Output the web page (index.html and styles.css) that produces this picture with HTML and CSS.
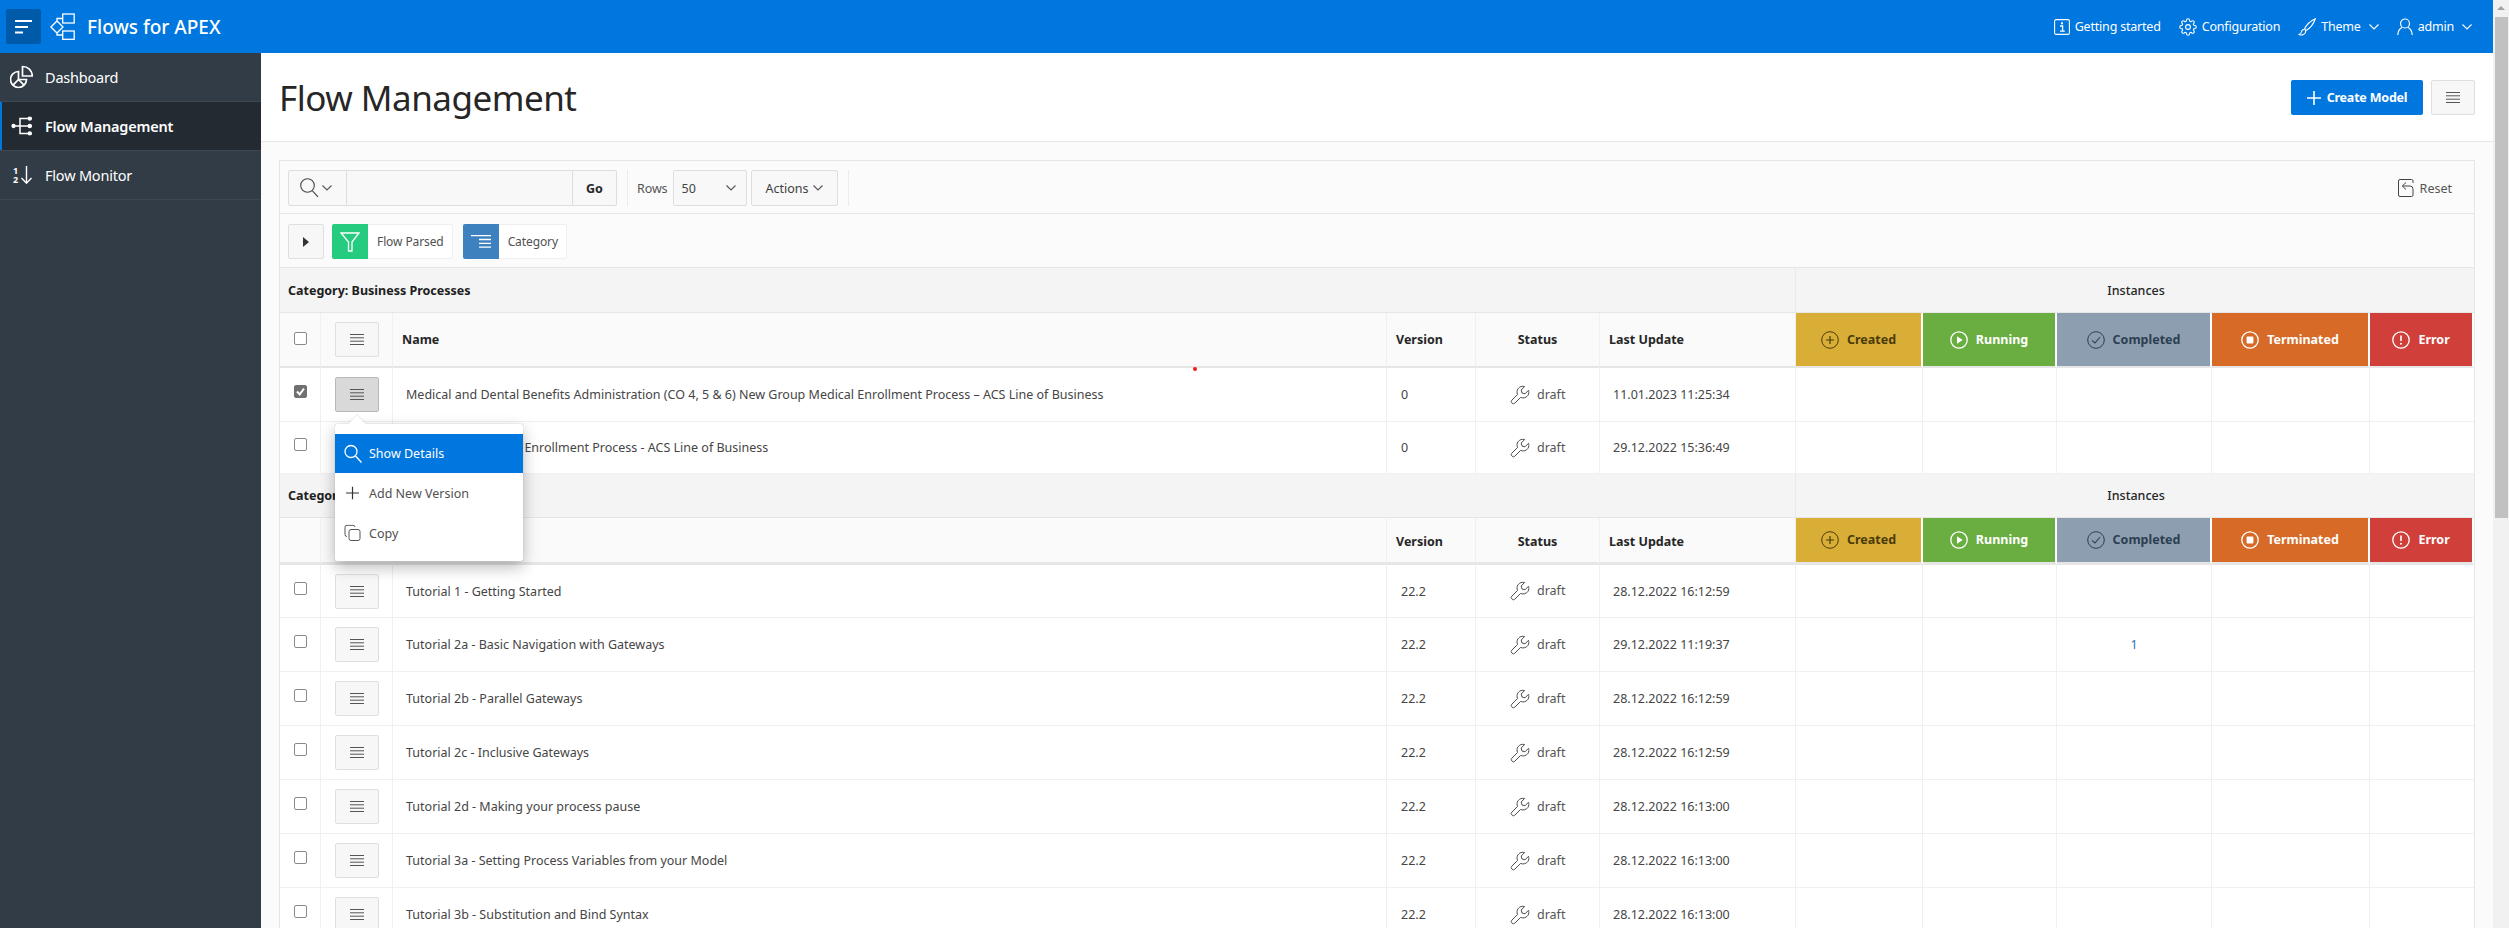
FILE: index.html
```html
<!DOCTYPE html>
<html lang="en">
<head>
<meta charset="utf-8">
<title>Flow Management</title>
<link rel="stylesheet" href="styles.css">
</head>
<body>
<svg class="defs" aria-hidden="true">
  <symbol id="i-menu" viewBox="0 0 14 11"><path d="M0 .5h14M0 3.800h14M0 7.200h14M0 10.500h14" fill="none" stroke="#555" stroke-width="1"/></symbol>
  <symbol id="i-wrench" viewBox="0 0 20 20"><path d="M7.500 9.500 1.800 15.200a1.900 1.900 0 0 0 0 2.700l.3.3a1.900 1.900 0 0 0 2.700 0l5.700-5.700c2.800 1 6 .2 7.500-2.200 1-1.600 1-3.600.5-5L15 8.800l-3-.8-.8-3 3.400-3.500C12 .8 9.500 1.800 8 3.800 6.800 5.400 6.800 7.600 7.500 9.500z" fill="none" stroke="#4d4d4d" stroke-width="1"/></symbol>
  <symbol id="i-created" viewBox="0 0 18 18"><circle cx="9" cy="9" r="8.300" fill="none" stroke="#4a3a0c"/><path d="M9 5v8M5 9h8" stroke="#4a3a0c" stroke-width="1.200"/></symbol>
  <symbol id="i-running" viewBox="0 0 18 18"><circle cx="9" cy="9" r="8.200" fill="none" stroke="#fff" stroke-width="1.300"/><path d="M7 5.200 12.600 9 7 12.800z" fill="#fff"/></symbol>
  <symbol id="i-completed" viewBox="0 0 18 18"><circle cx="9" cy="9" r="8.300" fill="none" stroke="#2d3e50"/><path d="M5 9.300 8 12l5-6" fill="none" stroke="#2d3e50" stroke-width="1.100"/></symbol>
  <symbol id="i-terminated" viewBox="0 0 18 18"><circle cx="9" cy="9" r="8.200" fill="none" stroke="#fff" stroke-width="1.300"/><rect x="5.600" y="5.600" width="6.800" height="6.800" rx="1" fill="#fff"/></symbol>
  <symbol id="i-error" viewBox="0 0 18 18"><circle cx="9" cy="9" r="8.200" fill="none" stroke="#fff" stroke-width="1.300"/><path d="M9 4.500v5.600" stroke="#fff" stroke-width="1.600"/><circle cx="9" cy="12.800" r="1" fill="#fff"/></symbol>
  <symbol id="i-chev" viewBox="0 0 10 6"><path d="M.5.5 5 5 9.500.5" fill="none" stroke="currentColor" stroke-width="1.100"/></symbol>
</svg>

<div class="page">
  <header class="topbar">
    <button class="nav-toggle" type="button" aria-label="Toggle navigation">
      <svg width="17" height="14" viewBox="0 0 17 14"><path d="M0 1h17M0 7h13M0 12.500h8" stroke="#fff" stroke-width="2" fill="none"/></svg>
    </button>
    <svg class="logo" width="25" height="27" viewBox="0 0 25 27"><g fill="none" stroke="#fff" stroke-width="1.300"><rect x="12.700" y="1" width="11.500" height="9"/><rect x="12.700" y="18" width="11.500" height="8.300"/><path d="M.9 14 7 8l6 6-6 6zM7 8V5.500h5.700M7 20v2h5.700"/></g></svg>
    <span class="brand">Flows for APEX</span>
    <nav class="topnav">
      <a class="topnav-item">
        <svg width="16" height="16" viewBox="0 0 16 16"><rect x=".6" y=".6" width="14.800" height="14.800" rx="1.500" fill="none" stroke="#fff" stroke-width="1.100"/><path d="M6 7h2.600v5M6 12.200h4.800" stroke="#fff" stroke-width="1.300" fill="none"/><rect x="7" y="3.300" width="2" height="2" fill="#fff"/></svg>
        Getting started</a>
      <a class="topnav-item">
        <svg width="18" height="18" viewBox="0 0 24 24" fill="none" stroke="#fff" stroke-width="1.500"><circle cx="12" cy="12" r="3.200"/><path d="M19.400 15a1.650 1.650 0 0 0 .33 1.820l.06.06a2 2 0 0 1 0 2.830 2 2 0 0 1-2.830 0l-.06-.06a1.650 1.650 0 0 0-1.820-.33 1.650 1.650 0 0 0-1 1.510V21a2 2 0 0 1-2 2 2 2 0 0 1-2-2v-.09A1.650 1.650 0 0 0 9 19.400a1.650 1.650 0 0 0-1.820.33l-.06.06a2 2 0 0 1-2.830 0 2 2 0 0 1 0-2.830l.06-.06a1.650 1.650 0 0 0 .33-1.820 1.650 1.650 0 0 0-1.510-1H3a2 2 0 0 1-2-2 2 2 0 0 1 2-2h.09A1.650 1.650 0 0 0 4.600 9a1.650 1.650 0 0 0-.33-1.820l-.06-.06a2 2 0 0 1 0-2.830 2 2 0 0 1 2.830 0l.06.06a1.650 1.650 0 0 0 1.820.33H9a1.650 1.650 0 0 0 1-1.510V3a2 2 0 0 1 2-2 2 2 0 0 1 2 2v.09a1.650 1.650 0 0 0 1 1.510 1.650 1.650 0 0 0 1.820-.33l.06-.06a2 2 0 0 1 2.830 0 2 2 0 0 1 0 2.830l-.06.06a1.650 1.650 0 0 0-.33 1.820V9a1.650 1.650 0 0 0 1.510 1H21a2 2 0 0 1 2 2 2 2 0 0 1-2 2h-.09a1.650 1.650 0 0 0-1.510 1z"/></svg>
        Configuration</a>
      <a class="topnav-item">
        <svg width="18" height="18" viewBox="0 0 18 18" fill="none" stroke="#fff" stroke-width="1.100"><path d="M17.300.8C12.500 3 8.300 7 6.500 11L8 12.500C12 10.500 15.500 6 17.300.8z"/><path d="M6 11.500C4 11.500 3.500 13 3.200 14.500 3 15.500 2 16 1 16.500 3 17.500 6 17 7.200 15 7.800 14 7.800 13 7 12.300"/></svg>
        Theme <svg class="chev" width="10" height="6"><use href="#i-chev"/></svg></a>
      <a class="topnav-item">
        <svg width="16" height="18" viewBox="0 0 16 18" fill="none" stroke="#fff" stroke-width="1.200"><circle cx="8" cy="5.500" r="4.500"/><path d="M5 9.500C3 10.500 1 12.500.8 17M11 9.500c2 1 4 3 4.200 7.500"/></svg>
        admin <svg class="chev" width="10" height="6"><use href="#i-chev"/></svg></a>
    </nav>
  </header>

  <div class="body-row">
    <aside class="sidebar">
      <a class="side-item">
        <svg class="side-icon" width="23" height="23" viewBox="0 0 23 23" fill="none" stroke="#fff" stroke-width="1.700"><path d="M8.500 6A8 8 0 1 0 16.500 14H8.500z"/><path d="M12.500 1v9.500H22.300A9.700 9.700 0 0 0 12.500 1z"/><path d="M8.500 14 3 19.700M8.500 14l5.500 5.700"/></svg>
        Dashboard</a>
      <a class="side-item is-active">
        <svg class="side-icon" width="22" height="19" viewBox="-2 0 22 19" fill="none" stroke="#fff" stroke-width="1.500"><circle cx="1.500" cy="9.500" r="1.400" fill="#fff"/><circle cx="17.800" cy="2" r="1.500" fill="#fff"/><circle cx="17.800" cy="9.500" r="1.500" fill="#fff"/><circle cx="17.800" cy="17" r="1.500" fill="#fff"/><path d="M3 9.500h13M8 9.500V2h8M8 9.500V17h8"/></svg>
        Flow Management</a>
      <a class="side-item">
        <span class="side-icon side-sort">
          <span class="side-digits"><span>1</span><span>2</span></span>
          <svg width="11" height="18" viewBox="0 0 11 18"><path d="M5.500 0v17M.5 12l5 5.200 5-5.200" fill="none" stroke="#fff" stroke-width="1.400"/></svg>
        </span>
        Flow Monitor</a>
    </aside>

    <main class="content">
      <div class="titlebar">
        <h1 class="title">Flow Management</h1>
        <div class="title-actions">
          <button class="btn-primary" type="button"><svg width="14" height="14" viewBox="0 0 14 14"><path d="M7 0v14M0 7h14" stroke="#fff" stroke-width="1.600"/></svg>Create Model</button>
          <button class="btn-light btn-titlemenu" type="button" aria-label="Menu"><svg width="14" height="11"><use href="#i-menu"/></svg></button>
        </div>
      </div>

      <section class="region">
        <div class="toolbar">
          <div class="search">
            <span class="search-type">
              <svg width="19" height="20" viewBox="0 0 19 20" fill="none" stroke="#444" stroke-width="1.100"><circle cx="7.500" cy="7.500" r="6.800"/><path d="m12.500 12.800 5.500 6"/></svg>
              <svg class="chev-dark" width="10" height="6"><use href="#i-chev"/></svg>
            </span>
            <span class="search-input"></span>
            <span class="search-go">Go</span>
          </div>
          <span class="tool-sep"></span>
          <span class="rows-label">Rows</span>
          <span class="rows-select">50<svg class="chev-dark" width="10" height="6"><use href="#i-chev"/></svg></span>
          <span class="actions-btn">Actions <svg class="chev-dark" width="10" height="6"><use href="#i-chev"/></svg></span>
          <span class="tool-sep"></span>
          <span class="reset"><svg width="16" height="18" viewBox="0 0 16 18" fill="none" stroke="#444" stroke-width="1"><path d="M15 4V2a1.500 1.500 0 0 0-1.500-1.500H2A1.500 1.500 0 0 0 .5 2v14A1.500 1.500 0 0 0 2 17.500h11.500A1.500 1.500 0 0 0 15 16v-6a3 3 0 0 0-3-3H4.500M8 3.500l-3.700 3.500L8 10.500"/></svg>Reset</span>
        </div>

        <div class="filters">
          <button class="btn-light btn-expand" type="button" aria-label="Expand"><svg width="6" height="10" viewBox="0 0 6 10"><path d="M0 0 6 5 0 10z" fill="#333"/></svg></button>
          <span class="chip">
            <span class="chip-icon chip-green"><svg width="20" height="20" viewBox="0 0 20 20" fill="none" stroke="#fff" stroke-width="1.300"><path d="M1 1h18l-7 9v9H8.500v-9z"/></svg></span>
            <span class="chip-text">Flow Parsed</span>
          </span>
          <span class="chip">
            <span class="chip-icon chip-blue"><svg width="20" height="13" viewBox="0 0 20 13" fill="none" stroke="#fff" stroke-width="1.300"><path d="M0 .7h20M8 4.500h12M8 8.300h12M8 12.200h12"/></svg></span>
            <span class="chip-text">Category</span>
          </span>
        </div>

        <table class="grid">
          <colgroup>
            <col class="c-check"><col class="c-action"><col class="c-name"><col class="c-version"><col class="c-status"><col class="c-update">
            <col class="c-created"><col class="c-running"><col class="c-completed"><col class="c-terminated"><col class="c-error">
          </colgroup>
          <tbody>
            <tr class="group group-first"><td colspan="6" class="group-name">Category: Business Processes</td><td colspan="5" class="group-inst">Instances</td></tr>
            <tr class="head head-first">
              <th class="cell-center"><span class="cb cb-head"></span></th>
              <th class="cell-center"><button class="row-btn" type="button" aria-label="Row actions"><svg width="14" height="11"><use href="#i-menu"/></svg></button></th>
              <th>Name</th><th>Version</th><th class="cell-center">Status</th><th>Last Update</th>
              <th class="st st-created"><svg width="18" height="18"><use href="#i-created"/></svg>Created</th>
              <th class="st st-running"><svg width="18" height="18"><use href="#i-running"/></svg>Running</th>
              <th class="st st-completed"><svg width="18" height="18"><use href="#i-completed"/></svg>Completed</th>
              <th class="st st-terminated"><svg width="18" height="18"><use href="#i-terminated"/></svg>Terminated</th>
              <th class="st st-error"><svg width="18" height="18"><use href="#i-error"/></svg>Error</th>
            </tr>
            <tr class="row">
              <td class="cell-center"><span class="cb cb-on"><svg width="13" height="13" viewBox="0 0 13 13"><path d="m3 6.500 2.700 3L10 3.500" fill="none" stroke="#fff" stroke-width="2"/></svg></span></td>
              <td class="cell-center cell-menu"><button class="row-btn row-btn-on" type="button" aria-label="Row actions"><svg width="14" height="11"><use href="#i-menu"/></svg></button>
                <div class="menu">
                  <a class="menu-item is-current"><svg width="18" height="19" viewBox="0 0 18 19" fill="none" stroke="#fff" stroke-width="1.300"><circle cx="7" cy="7" r="6"/><path d="m11.500 11.500 6 6.500"/></svg>Show Details</a>
                  <a class="menu-item"><svg class="menu-plus" width="13" height="13" viewBox="0 0 13 13"><path d="M6.500 0v13M0 6.500h13" stroke="#333" stroke-width="1.200"/></svg>Add New Version</a>
                  <a class="menu-item"><svg width="17" height="17" viewBox="0 0 17 17" fill="none" stroke="#555" stroke-width="1"><rect x="5" y="5" width="11" height="11" rx="2"/><path d="M11 2.500A2 2 0 0 0 9 .8H3A2 2 0 0 0 1 2.800V10a2 2 0 0 0 2 2"/></svg>Copy</a>
                </div>
              </td>
              <td class="cell-name cell-marked"><span class="red-dot"></span>Medical and Dental Benefits Administration (CO 4, 5 &amp; 6) New Group Medical Enrollment Process – ACS Line of Business</td>
              <td class="cell-version">0</td><td class="cell-draft"><svg width="20" height="20"><use href="#i-wrench"/></svg>draft</td><td class="cell-date">11.01.2023 11:25:34</td>
              <td></td><td></td><td></td><td></td><td></td>
            </tr>
            <tr class="row row-last">
              <td class="cell-center"><span class="cb"></span></td>
              <td class="cell-center"></td>
              <td class="cell-name">New Group Medical Enrollment Process - ACS Line of Business</td>
              <td class="cell-version">0</td><td class="cell-draft"><svg width="20" height="20"><use href="#i-wrench"/></svg>draft</td><td class="cell-date">29.12.2022 15:36:49</td>
              <td></td><td></td><td></td><td></td><td></td>
            </tr>
            <tr class="group group-second"><td colspan="6" class="group-name">Category: Tutorials</td><td colspan="5" class="group-inst">Instances</td></tr>
            <tr class="head head-second">
              <th></th><th></th><th>Name</th><th>Version</th><th class="cell-center">Status</th><th>Last Update</th>
              <th class="st st-created"><svg width="18" height="18"><use href="#i-created"/></svg>Created</th>
              <th class="st st-running"><svg width="18" height="18"><use href="#i-running"/></svg>Running</th>
              <th class="st st-completed"><svg width="18" height="18"><use href="#i-completed"/></svg>Completed</th>
              <th class="st st-terminated"><svg width="18" height="18"><use href="#i-terminated"/></svg>Terminated</th>
              <th class="st st-error"><svg width="18" height="18"><use href="#i-error"/></svg>Error</th>
            </tr>
            <tr class="row row-short">
              <td class="cell-center"><span class="cb"></span></td><td class="cell-center"><button class="row-btn" type="button" aria-label="Row actions"><svg width="14" height="11"><use href="#i-menu"/></svg></button></td>
              <td class="cell-name">Tutorial 1 - Getting Started</td><td class="cell-version">22.2</td><td class="cell-draft"><svg width="20" height="20"><use href="#i-wrench"/></svg>draft</td><td class="cell-date">28.12.2022 16:12:59</td>
              <td></td><td></td><td></td><td></td><td></td>
            </tr>
            <tr class="row">
              <td class="cell-center"><span class="cb"></span></td><td class="cell-center"><button class="row-btn" type="button" aria-label="Row actions"><svg width="14" height="11"><use href="#i-menu"/></svg></button></td>
              <td class="cell-name">Tutorial 2a - Basic Navigation with Gateways</td><td class="cell-version">22.2</td><td class="cell-draft"><svg width="20" height="20"><use href="#i-wrench"/></svg>draft</td><td class="cell-date">29.12.2022 11:19:37</td>
              <td></td><td></td><td class="cell-count">1</td><td></td><td></td>
            </tr>
            <tr class="row">
              <td class="cell-center"><span class="cb"></span></td><td class="cell-center"><button class="row-btn" type="button" aria-label="Row actions"><svg width="14" height="11"><use href="#i-menu"/></svg></button></td>
              <td class="cell-name">Tutorial 2b - Parallel Gateways</td><td class="cell-version">22.2</td><td class="cell-draft"><svg width="20" height="20"><use href="#i-wrench"/></svg>draft</td><td class="cell-date">28.12.2022 16:12:59</td>
              <td></td><td></td><td></td><td></td><td></td>
            </tr>
            <tr class="row">
              <td class="cell-center"><span class="cb"></span></td><td class="cell-center"><button class="row-btn" type="button" aria-label="Row actions"><svg width="14" height="11"><use href="#i-menu"/></svg></button></td>
              <td class="cell-name">Tutorial 2c - Inclusive Gateways</td><td class="cell-version">22.2</td><td class="cell-draft"><svg width="20" height="20"><use href="#i-wrench"/></svg>draft</td><td class="cell-date">28.12.2022 16:12:59</td>
              <td></td><td></td><td></td><td></td><td></td>
            </tr>
            <tr class="row">
              <td class="cell-center"><span class="cb"></span></td><td class="cell-center"><button class="row-btn" type="button" aria-label="Row actions"><svg width="14" height="11"><use href="#i-menu"/></svg></button></td>
              <td class="cell-name">Tutorial 2d - Making your process pause</td><td class="cell-version">22.2</td><td class="cell-draft"><svg width="20" height="20"><use href="#i-wrench"/></svg>draft</td><td class="cell-date">28.12.2022 16:13:00</td>
              <td></td><td></td><td></td><td></td><td></td>
            </tr>
            <tr class="row">
              <td class="cell-center"><span class="cb"></span></td><td class="cell-center"><button class="row-btn" type="button" aria-label="Row actions"><svg width="14" height="11"><use href="#i-menu"/></svg></button></td>
              <td class="cell-name">Tutorial 3a - Setting Process Variables from your Model</td><td class="cell-version">22.2</td><td class="cell-draft"><svg width="20" height="20"><use href="#i-wrench"/></svg>draft</td><td class="cell-date">28.12.2022 16:13:00</td>
              <td></td><td></td><td></td><td></td><td></td>
            </tr>
            <tr class="row">
              <td class="cell-center"><span class="cb"></span></td><td class="cell-center"><button class="row-btn" type="button" aria-label="Row actions"><svg width="14" height="11"><use href="#i-menu"/></svg></button></td>
              <td class="cell-name">Tutorial 3b - Substitution and Bind Syntax</td><td class="cell-version">22.2</td><td class="cell-draft"><svg width="20" height="20"><use href="#i-wrench"/></svg>draft</td><td class="cell-date">28.12.2022 16:13:00</td>
              <td></td><td></td><td></td><td></td><td></td>
            </tr>
          </tbody>
        </table>
      </section>
    </main>
  </div>
</div>

<div class="scrollbar">
  <span class="scroll-up"></span>
  <span class="scroll-thumb"></span>
</div>
</body>
</html>
```
FILE: styles.css
```css
* { box-sizing: border-box; }
html, body { height: 100%; }
body {
  margin: 0;
  display: flex;
  height: 928px;
  overflow: hidden;
  font-family: "Noto Sans", "Open Sans", sans-serif;
  font-size: 12.500px;
  color: #404040;
  background: #fff;
}
.defs { width: 0; height: 0; position: absolute; }
svg { flex: none; display: block; }
button { font-family: inherit; cursor: default; }

.page { flex: 1; min-width: 0; display: flex; flex-direction: column; }

/* top bar */
.topbar {
  height: 53px;
  flex: none;
  background: #0076df;
  color: #fff;
  display: flex;
  align-items: center;
  padding-left: 6px;
}
.nav-toggle {
  width: 35px;
  height: 35px;
  border: 0;
  border-radius: 2px;
  background: #005aaa;
  display: flex;
  align-items: center;
  justify-content: center;
  padding: 0;
}
.logo { margin-left: 9px; }
.brand { margin-left: 12px; font-size: 19px; font-weight: 500; }
.topnav { margin-left: auto; display: flex; align-items: center; gap: 18px; padding-right: 21px; }
.topnav-item { display: flex; align-items: center; gap: 5px; font-size: 12.500px; letter-spacing: -.2px; color: #fff; }
.chev { margin-left: 3px; color: #fff; }

/* layout */
.body-row { flex: 1; min-height: 0; display: flex; }
.sidebar { width: 261px; flex: none; background: #323c46; color: #fff; }
.side-item {
  display: flex;
  align-items: center;
  height: 49px;
  padding-left: 45px;
  position: relative;
  border-bottom: 1px solid #3e4852;
  font-size: 14.500px;
  letter-spacing: -.2px;
}
.side-icon { position: absolute; left: 10px; top: 50%; transform: translateY(-50%); }
.is-active.side-item { background: #232a31; font-weight: 600; box-shadow: inset 2px 0 0 #0076df; }
.side-sort { left: 13px; display: flex; gap: 3px; align-items: flex-start; letter-spacing: 0; }
.side-digits { display: flex; flex-direction: column; font-size: 9px; line-height: 9px; font-weight: 700; }

.content { flex: 1; min-width: 0; background: #fbfbfb; overflow: hidden; }
.titlebar {
  height: 89px;
  background: #fff;
  border-bottom: 1px solid #e6e6e6;
  display: flex;
  align-items: center;
  padding: 0 18px;
}
.title { margin: 0; font-size: 35px; font-weight: 400; color: #262626; letter-spacing: -.5px; }
.title-actions { margin-left: auto; display: flex; gap: 8px; margin-top: 1px; }
.btn-primary {
  width: 132px;
  height: 35px;
  border: 0;
  border-radius: 2px;
  background: #0076df;
  color: #fff;
  font-size: 12.500px;
  font-weight: 700;
  display: flex;
  align-items: center;
  justify-content: center;
  gap: 6px;
  padding: 0;
  letter-spacing: -.2px;
}
.btn-light {
  border: 1px solid #dfdfdf;
  border-radius: 2px;
  background: #f7f7f7;
  display: flex;
  align-items: center;
  justify-content: center;
  padding: 0;
}
.btn-titlemenu { width: 44px; height: 35px; }

/* region */
.region { margin: 18px 18px 0; background: #fff; border: 1px solid #e6e6e6; border-bottom: 0; }
.toolbar {
  height: 53px;
  background: #fbfbfb;
  border-bottom: 1px solid #e6e6e6;
  display: flex;
  align-items: flex-start;
  padding: 9px 8px 0;
}
.search {
  width: 329px;
  height: 36px;
  display: flex;
  border: 1px solid #dedede;
  border-radius: 2px;
  background: #f8f8f8;
}
.search-type { width: 57px; display: flex; align-items: center; padding-left: 11px; gap: 3px; color: #444; }
.search-input { flex: 1; border-left: 1px solid #dedede; border-right: 1px solid #dedede; }
.search-go { width: 43px; display: flex; align-items: center; justify-content: center; font-weight: 700; color: #262626; }
.tool-sep { width: 1px; height: 36px; background: #ececec; margin: 0 9px 0 10px; }
.rows-label { height: 36px; display: flex; align-items: center; color: #555; margin-right: 5px; letter-spacing: -.1px; }
.rows-select {
  width: 74px;
  height: 36px;
  border: 1px solid #dedede;
  border-radius: 2px;
  background: #f8f8f8;
  display: flex;
  align-items: center;
  justify-content: space-between;
  padding: 0 10px 0 8px;
  color: #444;
  margin-right: 4px;
}
.actions-btn {
  width: 87px;
  height: 36px;
  border: 1px solid #dedede;
  border-radius: 2px;
  background: #f8f8f8;
  display: flex;
  align-items: center;
  justify-content: center;
  gap: 4px;
  color: #404040;
}
.chev-dark { color: #555; }
.reset { margin-left: auto; height: 36px; display: flex; align-items: center; gap: 6px; color: #555; margin-right: 14px; }

.filters {
  height: 54px;
  background: #fbfbfb;
  border-bottom: 1px solid #e6e6e6;
  display: flex;
  align-items: flex-start;
  padding: 10px 8px 0;
}
.btn-expand { width: 36px; height: 35px; margin-right: 8px; }
.chip { height: 35px; display: flex; background: #fff; border: 1px solid #efefef; border-radius: 2px; margin-right: 10px; }
.chip-icon { width: 36px; margin: -1px 0 -1px -1px; display: flex; align-items: center; justify-content: center; border-radius: 2px 0 0 2px; }
.chip-green { background: #25cb7f; }
.chip-blue { background: #3d81bf; }
.chip-text { padding: 0 8px 0 9px; display: flex; align-items: center; font-size: 12px; letter-spacing: -.1px; color: #505050; }

/* grid */
.grid { width: 2194px; table-layout: fixed; border-collapse: separate; border-spacing: 0; }
.c-check { width: 41px; } .c-action { width: 72px; } .c-name { width: 994px; } .c-version { width: 89px; }
.c-status { width: 124px; } .c-update { width: 196px; } .c-created { width: 127px; } .c-running { width: 134px; }
.c-completed { width: 155px; } .c-terminated { width: 158px; } .c-error { width: 104px; }

.grid td, .grid th { padding: 0; border-right: 1px solid #f0f0f0; border-bottom: 1px solid #f0f0f0; }
.grid tr > :last-child { border-right: 0; }

.group td { background: #f4f4f4; color: #202020; border-bottom-color: #e6e6e6; }
.group-first { height: 45px; }
.group-second { height: 44px; }
.group .group-name { padding-left: 8px; font-weight: 700; border-right: 1px solid #e9e9e9; }
.group .group-inst { text-align: center; font-weight: 500; color: #262626; padding-left: 2px; }

.head th { background: #fafafa; font-weight: 700; font-size: 12.500px; color: #262626; text-align: left; padding-left: 9px; border-bottom: 2px solid #e6e6e6; }
.head-first { height: 55px; }
.head-second { height: 47px; }
.head-second th { border-bottom-width: 3px; padding-top: 2px; }
.grid .cell-center { text-align: center; padding-left: 0; padding-right: 0; }

.grid th.st { text-align: center; padding: 0; border-right: 2px solid #fff; font-weight: 700; border-bottom-color: #e6e6e6; }
.st svg { display: inline-block; vertical-align: -5px; margin-right: 8px; }
.st-created { background: #d9ae37 !important; color: #4a3a0c !important; }
.st-running { background: #6aae42 !important; color: #fff !important; }
.st-completed { background: #8c9eb0 !important; color: #2d3e50 !important; }
.st-terminated { background: #d66a26 !important; color: #fff !important; }
.st-error { background: #d13f3b !important; color: #fff !important; }

.row { height: 54px; background: #fff; }
.row-last { height: 52px; }
.row-short { height: 53px; }
.cell-name { padding-left: 13px !important; color: #454545; }
.cell-marked { position: relative; }
.red-dot { position: absolute; left: 800px; top: -1px; width: 4px; height: 4px; border-radius: 50%; background: #f01818; }
.cell-version { padding-left: 14px !important; color: #454545; }
.cell-draft { color: #555; }
.cell-draft svg { display: inline-block; vertical-align: -6px; margin: 0 7px 0 34px; }
.cell-date { padding-left: 13px !important; color: #454545; }
.cell-count { text-align: center; color: #2a6fc0; }

.cb {
  display: block;
  width: 13px;
  height: 13px;
  margin: 0 auto 6px;
  border: 1px solid #8a8a8a;
  border-radius: 2px;
  background: #fff;
}
.cb-head { margin-bottom: 2px; }
.cb-on { background: #707070; border-color: #707070; }
.cb-on svg { margin: -1px; }

.row-btn {
  width: 44px;
  height: 35px;
  margin: 0 auto;
  border: 1px solid #dfdfdf;
  border-radius: 2px;
  background: #f7f7f7;
  display: flex;
  align-items: center;
  justify-content: center;
  padding: 0;
}
.row-btn-on { background: #d9d9d9; border-color: #b8b8b8; }

/* popup menu */
.cell-menu { position: relative; }
.menu {
  position: absolute;
  z-index: 5;
  left: 14px;
  top: 56px;
  width: 188px;
  height: 137px;
  padding: 10px 0 0;
  background: #fff;
  border-radius: 2px;
  box-shadow: 0 0 1px rgba(0,0,0,.35), 0 6px 16px rgba(0,0,0,.28);
  text-align: left;
}
.menu::before {
  content: "";
  position: absolute;
  left: 16px;
  top: -6px;
  width: 12px;
  height: 12px;
  background: #fff;
  transform: rotate(45deg);
  box-shadow: -1px -1px 1px rgba(0,0,0,.06);
}
.menu-item {
  position: relative;
  height: 40px;
  display: flex;
  align-items: center;
  font-weight: 400;
  color: #505050;
  padding-left: 34px;
}
.menu-item svg { position: absolute; left: 9px; top: 50%; transform: translateY(-50%); }
.menu-item .menu-plus { left: 11px; }
.menu-item.is-current { height: 39px; background: #0076df; color: #fff; }

/* scrollbar */
.scrollbar { width: 16px; flex: none; background: #f1f1f1; position: relative; }
.scroll-up {
  position: absolute;
  left: 4px;
  top: 6px;
  border-left: 4px solid transparent;
  border-right: 4px solid transparent;
  border-bottom: 4px solid #a3a3a3;
}
.scroll-thumb { position: absolute; left: 2px; right: 1px; top: 17px; height: 501px; background: #c1c1c1; }
```
